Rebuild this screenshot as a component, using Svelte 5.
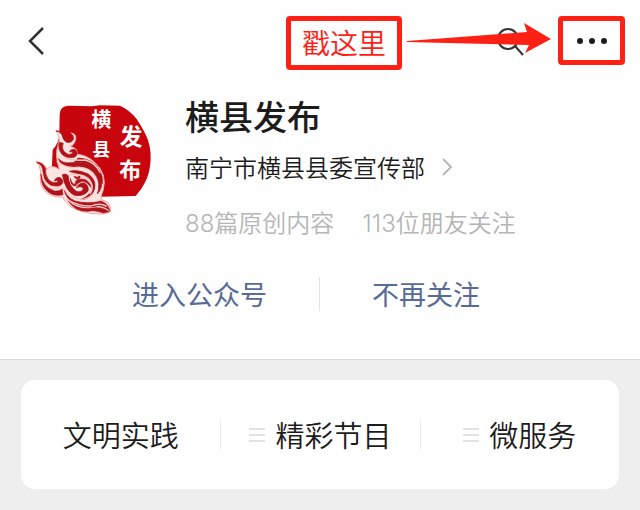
<script lang="ts">
  const account = {
    name: "横县发布",
    owner: "南宁市横县县委宣传部",
    articles: "88篇原创内容",
    friends: "113位朋友关注",
  };

  const tabs = [
    {label: "文明实践", menu: false},
    {label: "精彩节目", menu: true},
    {label: "微服务", menu: true},
  ];
</script>

<main>
  <header>
    <button class="back" aria-label="返回">
      <svg width="18" height="30" viewBox="0 0 18 30">
        <path d="M15 2 L2 15 L15 28" />
      </svg>
    </button>
    <div class="callout">戳这里</div>
    <div class="track">
      <button class="search" aria-label="搜索">
        <svg width="30" height="30" viewBox="0 0 30 30">
          <circle cx="12" cy="12" r="10" />
          <path d="M19 19 L27 28" />
        </svg>
      </button>
      <svg class="arrow" viewBox="0 0 156 54">
        <path d="M5 25 L125 16 L122 7 L149 23 L123 37 L127 29 L5 26 Z" />
      </svg>
    </div>
    <button class="more" aria-label="更多">
      <i></i><i></i><i></i>
    </button>
  </header>

  <section class="profile">
    <svg class="logo" width="120" height="120" viewBox="45 37 360 360">
      <path
        class="seal"
        d="M119 75 Q119 50 145 48 L215 50 L240 47 L300 48 Q328 60 350 88 Q380 135 385 155 Q396 190 390 230 Q386 265 364 297 L347 319 L240 321 L130 322 Q90 322 68 285 L95 245 L98 180 Q118 160 118 130 Z"
      />
      <path
        class="paper"
        d="M107 122 Q122 125 130 142 Q140 160 154 150 Q166 138 154 130 Q170 132 167 150 Q162 168 150 170 Q174 175 172 194 Q200 196 224 218 Q262 252 250 300 Q240 325 246 331 Q275 335 271 367 L250 373 Q215 376 178 363 Q139 350 128 322 Q95 325 72 302 Q57 285 62 245 Q60 225 48 216 Q75 217 80 239 Q94 222 118 239 Q103 195 115 163 Q123 145 107 122 Z"
      />
      <g class="flame">
        <path d="M108 124 Q127 127 129 146 Q137 164 155 156 Q168 143 152 134 Q160 146 149 150 Q139 151 136 139 Q126 122 108 124 Z" />
        <path d="M118 158 Q112 180 128 196 Q145 209 165 202 Q178 190 166 180 Q153 176 148 187 Q158 183 158 191 Q145 200 131 184 Q124 172 130 161 Z" />
        <path d="M115 207 Q123 233 162 231 Q211 228 229 260 Q242 282 232 313 Q248 297 245 272 Q235 234 198 222 Q175 216 153 219 Q129 222 115 207 Z" />
        <path d="M174 205 Q222 207 240 244 Q250 263 247 282 Q230 235 200 222 Q180 216 163 217 Z" />
        <path d="M50 218 Q70 227 69 248 Q71 276 93 287 Q121 294 128 280 Q130 267 117 263 Q106 264 103 274 Q116 270 113 278 Q95 282 84 267 Q75 255 77 237 Q67 217 50 218 Z" />
        <path d="M63 253 Q67 292 103 304 Q120 305 126 298 L129 315 Q96 323 75 297 Q62 281 63 253 Z" />
        <path d="M127 255 Q135 302 161 316 Q189 323 204 305 Q208 287 193 280 Q177 278 169 295 Q184 287 190 297 Q185 309 169 305 Q145 287 145 258 Q137 250 127 255 Z" />
        <path d="M148 245 Q170 238 205 253 Q239 278 216 315 Q203 330 180 330 Q216 317 219 290 Q214 256 174 252 Q153 248 148 245 Z" />
        <path d="M151 266 Q156 286 166 283 Q166 268 180 268 Q207 266 215 295 Q201 276 187 275 Q173 278 167 289 Q151 290 151 266 Z" />
        <path d="M132 300 Q147 335 184 338 Q222 341 241 334 Q264 339 270 365 Q262 352 236 348 Q200 358 165 343 Q139 330 132 300 Z" />
        <path d="M143 332 Q168 361 211 356 Q245 349 267 366 L250 370 Q221 360 205 365 Q165 367 143 332 Z" />
        <path d="M162 260 Q166 270 175 268 Q184 264 179 257 Q176 264 170 262 Z" />
      </g>
      <g class="swirls">
        <path d="M110 215 Q140 239 175 233 Q210 232 226 263 M131 205 Q165 214 195 211 Q226 218 241 250" />
        <path d="M66 248 Q70 284 98 296 Q117 297 127 288 M130 295 Q152 326 184 329 Q206 328 223 309" />
        <path d="M149 255 Q179 249 208 272 Q224 292 210 313 M140 329 Q177 350 212 349 Q241 338 260 350" />
      </g>
      <g class="seal-text">
        <text x="214" y="113" font-size="60">横</text>
        <text x="217" y="198" font-size="54">县</text>
        <text x="299" y="165" font-size="68">发</text>
        <text x="298" y="264" font-size="66">布</text>
      </g>
    </svg>
    <div class="info">
      <h1>{account.name}</h1>
      <a class="owner" href="#owner">
        {account.owner}
        <svg width="12" height="20" viewBox="0 0 12 20">
          <path d="M2 2 L10 10 L2 18" />
        </svg>
      </a>
      <p class="stats">
        <span>{account.articles}</span>
        <span>{account.friends}</span>
      </p>
    </div>
  </section>

  <div class="actions">
    <button>进入公众号</button>
    <span class="divider"></span>
    <button>不再关注</button>
  </div>

  <div class="services">
    <nav>
      {#each tabs as tab}
        <button>
          {#if tab.menu}
            <svg width="16" height="16" viewBox="0 0 16 16">
              <path d="M0 2 H16 M0 8 H16 M0 14 H16" />
            </svg>
          {/if}
          {tab.label}
        </button>
      {/each}
    </nav>
  </div>
</main>

<style>
  :global(body) {
    margin: 0;
    background: #eee;
  }

  main {
    background: #fefefe;
    color: #1c1c1c;
    font-family: "Noto Sans CJK SC", sans-serif;
  }

  button {
    padding: 0;
    border: 0;
    background: none;
    color: inherit;
    font-family: inherit;
    cursor: pointer;
  }

  svg {
    display: block;
    fill: none;
  }

  header {
    display: flex;
    align-items: flex-start;
    padding: 16px 15px 0 28px;
  }

  .back {
    margin: 10px auto 0 0;
  }

  .back path {
    stroke: #333;
    stroke-width: 2.5;
  }

  .callout {
    box-sizing: border-box;
    height: 54px;
    padding: 0 11px;
    border: 5px solid #fd2015;
    border-radius: 4px;
    color: #fd2015;
    font-size: 28px;
    font-weight: 350;
    line-height: 42px;
  }

  .track {
    position: relative;
    width: 156px;
    height: 54px;
  }

  .search {
    margin: 11px 0 0 94px;
  }

  .search svg {
    stroke: #333;
    stroke-width: 2;
  }

  .arrow {
    position: absolute;
    inset: 0;
    pointer-events: none;
  }

  .arrow path {
    fill: #fd2015;
  }

  .more {
    display: flex;
    align-items: center;
    justify-content: center;
    gap: 6px;
    box-sizing: border-box;
    width: 67px;
    height: 49px;
    border: 5px solid #fd2015;
    border-radius: 4px;
  }

  .more i {
    width: 6px;
    height: 6px;
    border-radius: 50%;
    background: #1c1c1c;
  }

  .profile {
    display: flex;
    gap: 30px;
    padding: 21px 35px 0;
  }

  .logo {
    flex: none;
    margin-top: 11px;
  }

  .seal {
    fill: #c8040c;
  }

  .paper {
    fill: #fbe3e1;
    stroke: #f2a6a3;
    stroke-width: 3;
  }

  .flame {
    fill: #b01219;
    stroke: #b01219;
    stroke-width: 2;
  }

  .swirls {
    stroke: #f8c9c6;
    stroke-width: 4;
  }

  .seal-text {
    fill: #fff;
    font-weight: 700;
  }

  h1 {
    margin: 0;
    font-size: 34px;
    font-weight: 500;
    line-height: 50px;
  }

  .owner {
    display: flex;
    align-items: center;
    gap: 16px;
    margin-top: 8px;
    color: inherit;
    font-size: 24px;
    font-weight: 350;
    line-height: 36px;
    text-decoration: none;
  }

  .owner path {
    stroke: #b8b8b8;
    stroke-width: 2;
  }

  .stats {
    display: flex;
    gap: 28px;
    margin: 21px 0 0;
    color: #b5b5b5;
    font-family: Inter, "Noto Sans CJK SC", sans-serif;
    font-size: 24px;
    font-weight: 350;
    line-height: 36px;
  }

  .actions {
    display: flex;
    align-items: center;
    justify-content: center;
    gap: 52px;
    padding: 32px 28px 45px 0;
  }

  .actions button {
    color: #576b95;
    font-size: 27px;
    font-weight: 400;
    line-height: 40px;
  }

  .divider {
    width: 1px;
    height: 34px;
    background: #e4e4e4;
  }

  .services {
    padding: 20px 21px 21px;
    border-top: 1px solid #dadada;
    background: #eee;
  }

  nav {
    display: grid;
    grid-template-columns: repeat(3, 1fr);
    padding: 39px 0;
    border-radius: 14px;
    background: #fff;
  }

  nav button {
    display: flex;
    align-items: center;
    justify-content: center;
    gap: 10px;
    font-size: 29px;
    font-weight: 350;
    line-height: 31px;
  }

  nav button + button {
    border-left: 1px solid #ececec;
  }

  nav path {
    stroke: #e2e2e2;
    stroke-width: 2;
  }
</style>
